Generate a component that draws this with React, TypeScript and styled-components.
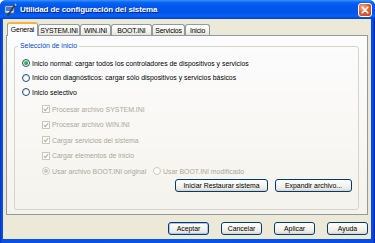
import React from "react";
import styled, { createGlobalStyle } from "styled-components";

const GlobalStyle = createGlobalStyle`
  html, body {
    margin: 0;
    padding: 0;
    background: #ffffff;
  }
  body {
    width: 375px;
    height: 243px;
    overflow: hidden;
  }
`;

const FUENTE = `"Liberation Sans", Arial, sans-serif`;

const Ventana = styled.div`
  width: 375px;
  height: 243px;
  box-sizing: border-box;
  display: flex;
  flex-direction: column;
  background: linear-gradient(90deg, #0a2fc4 0px, #0a4fe2 2px, #0854e6 50%, #0a4be0 calc(100% - 2px), #001fa6 100%);
  border-radius: 6px 6px 0 0;
  font-family: ${FUENTE};
  font-size: 6.9px;
  color: #000;
`;

const BarraTitulo = styled.div`
  height: 19px;
  flex: none;
  display: flex;
  align-items: center;
  padding: 0 3px 0 4px;
  gap: 3px;
  border-radius: 6px 6px 0 0;
  background: linear-gradient(180deg, #3d95ff 0%, #0a66f5 12%, #0058ee 30%, #0054e8 65%, #0862f8 85%, #003fd0 100%);
`;

const Titulo = styled.span`
  flex: 1;
  color: #ffffff;
  font-weight: bold;
  font-size: 8px;
  letter-spacing: -0.12px;
  text-shadow: 1px 1px 0 #0b1889;
  white-space: nowrap;
`;

const BotonCerrar = styled.div`
  width: 14px;
  height: 14px;
  box-sizing: border-box;
  border: 1px solid #ffffff;
  border-radius: 3px;
  background: radial-gradient(circle at 35% 30%, #f5ad90 0%, #e3603a 45%, #c8400f 100%);
  display: flex;
  align-items: center;
  justify-content: center;
`;

const Cuerpo = styled.div`
  flex: 1;
  margin: 0 4px 4px 3px;
  background: #ece9d8;
  padding: 3px 3px 4px 3px;
  display: flex;
  flex-direction: column;
`;

const FilaPestanas = styled.div`
  height: 13px;
  flex: none;
  display: flex;
  align-items: flex-end;
  padding-left: 1px;
  position: relative;
  z-index: 1;
`;

const Pestana = styled.div<{ $w: number; $activa?: boolean }>`
  width: ${(p) => p.$w}px;
  box-sizing: border-box;
  height: ${(p) => (p.$activa ? 14 : 11)}px;
  margin-bottom: ${(p) => (p.$activa ? -1 : 0)}px;
  border: 1px solid #919b9c;
  border-bottom: none;
  border-top: ${(p) => (p.$activa ? "2px solid #f7b338" : "1px solid #919b9c")};
  border-radius: 3px 3px 0 0;
  background: ${(p) =>
    p.$activa ? "#fcfcfe" : "linear-gradient(180deg, #ffffff 0%, #f3f2ec 60%, #e5e3da 100%)"};
  display: flex;
  align-items: center;
  justify-content: center;
  white-space: nowrap;
  letter-spacing: -0.15px;
  padding-bottom: ${(p) => (p.$activa ? 1 : 0)}px;
`;

const Panel = styled.div`
  height: 180px;
  flex: none;
  box-sizing: border-box;
  border: 1px solid #919b9c;
  background: linear-gradient(180deg, #fcfcfe 0%, #f8f7f3 60%, #f3f2ec 100%);
  padding: 6px 8px 4px 7px;
  display: flex;
  flex-direction: column;
`;

const Grupo = styled.fieldset`
  flex: 1;
  margin: 0;
  border: 1px solid #d5d5c6;
  border-radius: 3px;
  padding: 6px 6px 6px 7px;
  display: flex;
  flex-direction: column;
  min-width: 0;
`;

const Leyenda = styled.legend`
  color: #0046d5;
  line-height: 8px;
  padding: 0 2px;
  margin-left: -4px;
`;

const Fila = styled.div<{ $h: number }>`
  height: ${(p) => p.$h}px;
  display: flex;
  align-items: center;
`;

const Subgrupo = styled.div`
  margin-top: 2px;
  padding-left: 20px;
  display: flex;
  flex-direction: column;
`;

const Opcion = styled.label<{ $w?: number; $off?: boolean }>`
  display: flex;
  align-items: center;
  gap: 2px;
  width: ${(p) => (p.$w ? `${p.$w}px` : "auto")};
  color: ${(p) => (p.$off ? "#aca899" : "#000000")};
  white-space: nowrap;
`;

const Circulo = styled.span<{ $off?: boolean }>`
  width: 8px;
  height: 8px;
  flex: none;
  box-sizing: border-box;
  border-radius: 50%;
  border: 1px solid ${(p) => (p.$off ? "#cac8bb" : "#1c5180")};
  background: ${(p) =>
    p.$off ? "#ffffff" : "radial-gradient(circle at 70% 70%, #ffffff 30%, #dcdcd5 100%)"};
  display: flex;
  align-items: center;
  justify-content: center;
`;

const Punto = styled.span<{ $off?: boolean }>`
  width: 4px;
  height: 4px;
  border-radius: 50%;
  background: ${(p) =>
    p.$off ? "#cac8bb" : "radial-gradient(circle at 35% 35%, #55d04f 0%, #21a121 60%, #177a17 100%)"};
`;

const Caja = styled.span`
  width: 8px;
  height: 8px;
  flex: none;
  box-sizing: border-box;
  border: 1px solid #cac8bb;
  background: #ffffff;
  display: flex;
  align-items: center;
  justify-content: center;
`;

const FilaBotones = styled.div<{ $gap: number }>`
  display: flex;
  justify-content: flex-end;
  gap: ${(p) => p.$gap}px;
`;

const BotonesGrupo = styled(FilaBotones)`
  margin-top: auto;
`;

const BotonesPie = styled(FilaBotones)`
  margin-top: 7px;
`;

const Boton = styled.button<{ $w: number; $defecto?: boolean }>`
  width: ${(p) => p.$w}px;
  height: 13px;
  box-sizing: border-box;
  padding: 0;
  border: 1px solid #003c74;
  border-radius: 3px;
  background: linear-gradient(180deg, #ffffff 0%, #f5f4f0 45%, #ebeae3 80%, #d6d0c5 100%);
  box-shadow: ${(p) => (p.$defecto ? "inset 0 0 0 1px #a9c4f0" : "none")};
  font-family: ${FUENTE};
  font-size: 6.9px;
  color: #000000;
  line-height: 11px;
  white-space: nowrap;
`;

type Radio = { texto: string; activo?: boolean };

const radios: Radio[] = [
  { texto: "Inicio normal: cargar todos los controladores de dispositivos y servicios", activo: true },
  { texto: "Inicio con diagnósticos: cargar sólo dispositivos y servicios básicos" },
  { texto: "Inicio selectivo" },
];

const casillas = [
  "Procesar archivo SYSTEM.INI",
  "Procesar archivo WIN.INI",
  "Cargar servicios del sistema",
  "Cargar elementos de inicio",
];

const pestanas = [
  { nombre: "General", w: 31, activa: true },
  { nombre: "SYSTEM.INI", w: 42 },
  { nombre: "WIN.INI", w: 31 },
  { nombre: "BOOT.INI", w: 41 },
  { nombre: "Servicios", w: 33 },
  { nombre: "Inicio", w: 25 },
];

const IconoMsconfig = () => (
  <svg width="13" height="13" viewBox="0 0 13 13">
    <rect x="1" y="3" width="9" height="7" fill="#dfe6f2" stroke="#5a6b86" strokeWidth="0.8" />
    <rect x="2" y="4" width="7" height="4" fill="#3f78d8" />
    <path d="M4 12 L11 2" stroke="#3b3b3b" strokeWidth="1.8" strokeLinecap="round" />
    <path d="M10.5 1.5 L12 1 L11.5 3" stroke="#c9c9c9" strokeWidth="0.9" fill="none" />
  </svg>
);

const MarcaCheck = () => (
  <svg width="6" height="6" viewBox="0 0 6 6">
    <path d="M0.8 3 L2.4 4.6 L5.2 1.2" stroke="#b3b1a3" strokeWidth="1.1" fill="none" />
  </svg>
);

export default function App() {
  return (
    <>
      <GlobalStyle />
      <Ventana>
        <BarraTitulo>
          <IconoMsconfig />
          <Titulo>Utilidad de configuración del sistema</Titulo>
          <BotonCerrar>
            <svg width="8" height="8" viewBox="0 0 8 8">
              <path d="M1.2 1.2 L6.8 6.8 M6.8 1.2 L1.2 6.8" stroke="#ffffff" strokeWidth="1.6" strokeLinecap="round" />
            </svg>
          </BotonCerrar>
        </BarraTitulo>

        <Cuerpo>
          <FilaPestanas>
            {pestanas.map((t) => (
              <Pestana key={t.nombre} $w={t.w} $activa={t.activa}>
                {t.nombre}
              </Pestana>
            ))}
          </FilaPestanas>

          <Panel>
            <Grupo>
              <Leyenda>Selección de inicio</Leyenda>
              {radios.map((r) => (
                <Fila key={r.texto} $h={14.5}>
                  <Opcion>
                    <Circulo>{r.activo && <Punto />}</Circulo>
                    {r.texto}
                  </Opcion>
                </Fila>
              ))}
              <Subgrupo>
                {casillas.map((c) => (
                  <Fila key={c} $h={15.5}>
                    <Opcion $off>
                      <Caja>
                        <MarcaCheck />
                      </Caja>
                      {c}
                    </Opcion>
                  </Fila>
                ))}
                <Fila $h={15.5}>
                  <Opcion $off $w={111}>
                    <Circulo $off>
                      <Punto $off />
                    </Circulo>
                    Usar archivo BOOT.INI original
                  </Opcion>
                  <Opcion $off>
                    <Circulo $off />
                    Usar BOOT.INI modificado
                  </Opcion>
                </Fila>
              </Subgrupo>
              <BotonesGrupo $gap={7}>
                <Boton $w={93}>Iniciar Restaurar sistema</Boton>
                <Boton $w={77}>Expandir archivo...</Boton>
              </BotonesGrupo>
            </Grupo>
          </Panel>

          <BotonesPie $gap={12}>
            <Boton $w={41} $defecto>
              Aceptar
            </Boton>
            <Boton $w={41}>Cancelar</Boton>
            <Boton $w={41}>Aplicar</Boton>
            <Boton $w={41}>Ayuda</Boton>
          </BotonesPie>
        </Cuerpo>
      </Ventana>
    </>
  );
}
